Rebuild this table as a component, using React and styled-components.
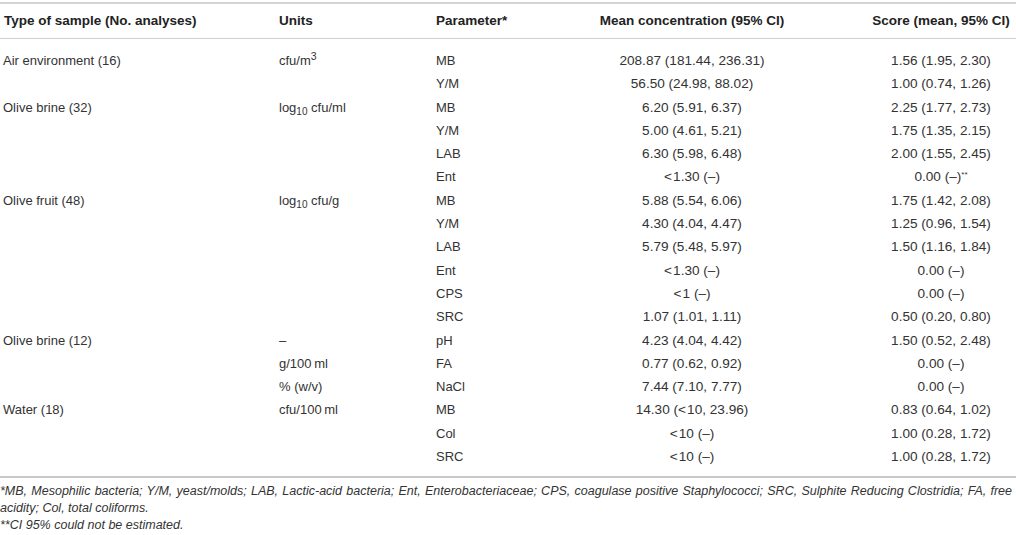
import React from "react";
import styled, { createGlobalStyle } from "styled-components";

const Global = createGlobalStyle`
  html, body { margin: 0; padding: 0; background: #fff; }
  body { font-family: "Liberation Sans", Arial, Helvetica, sans-serif; color: #333; }
`;

const Page = styled.div`
  width: 1016px;
  padding-top: 2px;
`;

const Grid = styled.div`
  display: grid;
  grid-template-columns: 279px 157px 128px 256px 1fr;
  grid-template-rows: 45px;
  grid-auto-rows: 23.3px;
  border-top: 2px solid #d4d4d4;
  border-bottom: 2px solid #c8c8c8;
  padding-bottom: 8px;
`;

const HeadCell = styled.div`
  height: 34px;
  line-height: 34px;
  text-align: ${(p) => (p.$center ? "center" : "left")};
  padding-left: ${(p) => p.$pl || 0}px;
  font-size: 13.5px;
  font-weight: bold;
  color: #222;
  border-bottom: 1.5px solid #cfcfcf;
  white-space: nowrap;
  align-self: start;
`;

const Cell = styled.div`
  line-height: 23.3px;
  text-align: ${(p) => (p.$center ? "center" : "left")};
  padding-left: ${(p) => p.$pl || 0}px;
  font-size: ${(p) => (p.$num ? 13.6 : 13)}px;
  color: #333;
  white-space: nowrap;
`;

const Sup = styled.sup`
  font-size: ${(p) => p.$size || 10}px;
  line-height: 0;
  vertical-align: ${(p) => p.$raise || 5}px;
`;

const Sub = styled.sub`
  font-size: 10px;
  line-height: 0;
  vertical-align: -3px;
`;

const Notes = styled.div`
  padding-top: 4.5px;
  padding-right: 4px;
  font-size: 12.5px;
  font-style: italic;
  line-height: 17px;
  color: #333;
`;

const Note = styled.p`
  margin: 0;
  text-align: ${(p) => (p.$justify ? "justify" : "left")};
`;

const log = (u) => (
  <>
    log<Sub>10</Sub>{" "}{u}
  </>
);

const lt = "<\u200a";

const rows = [
  ["Air environment (16)", <>cfu/m<Sup $size={10.5}>3</Sup></>, "MB", "208.87 (181.44, 236.31)", "1.56 (1.95, 2.30)"],
  ["", "", "Y/M", "56.50 (24.98, 88.02)", "1.00 (0.74, 1.26)"],
  ["Olive brine (32)", log("cfu/ml"), "MB", "6.20 (5.91, 6.37)", "2.25 (1.77, 2.73)"],
  ["", "", "Y/M", "5.00 (4.61, 5.21)", "1.75 (1.35, 2.15)"],
  ["", "", "LAB", "6.30 (5.98, 6.48)", "2.00 (1.55, 2.45)"],
  ["", "", "Ent", `${lt}1.30 (–)`, <>0.00 (–)<Sup $size={8} $raise={4}>**</Sup></>],
  ["Olive fruit (48)", log("cfu/g"), "MB", "5.88 (5.54, 6.06)", "1.75 (1.42, 2.08)"],
  ["", "", "Y/M", "4.30 (4.04, 4.47)", "1.25 (0.96, 1.54)"],
  ["", "", "LAB", "5.79 (5.48, 5.97)", "1.50 (1.16, 1.84)"],
  ["", "", "Ent", `${lt}1.30 (–)`, "0.00 (–)"],
  ["", "", "CPS", `${lt}1 (–)`, "0.00 (–)"],
  ["", "", "SRC", "1.07 (1.01, 1.11)", "0.50 (0.20, 0.80)"],
  ["Olive brine (12)", "–", "pH", "4.23 (4.04, 4.42)", "1.50 (0.52, 2.48)"],
  ["", "g/100\u2009ml", "FA", "0.77 (0.62, 0.92)", "0.00 (–)"],
  ["", "% (w/v)", "NaCl", "7.44 (7.10, 7.77)", "0.00 (–)"],
  ["Water (18)", "cfu/100\u2009ml", "MB", `14.30 (${lt}10, 23.96)`, "0.83 (0.64, 1.02)"],
  ["", "", "Col", `${lt}10 (–)`, "1.00 (0.28, 1.72)"],
  ["", "", "SRC", `${lt}10 (–)`, "1.00 (0.28, 1.72)"],
];

const headers = [
  { t: "Type of sample (No. analyses)", pl: 4 },
  { t: "Units" },
  { t: "Parameter*" },
  { t: "Mean concentration (95% CI)", center: true },
  { t: "Score (mean, 95% CI)", center: true, pl: 46 },
];

export default function App() {
  return (
    <>
      <Global />
      <Page>
        <Grid>
          {headers.map((h, i) => (
            <HeadCell key={i} $center={h.center} $pl={h.pl}>
              {h.t}
            </HeadCell>
          ))}
          {rows.map((r, ri) => (
            <React.Fragment key={ri}>
              <Cell $pl={3}>{r[0]}</Cell>
              <Cell>{r[1]}</Cell>
              <Cell>{r[2]}</Cell>
              <Cell $center $num>{r[3]}</Cell>
              <Cell $center $num $pl={46}>{r[4]}</Cell>
            </React.Fragment>
          ))}
        </Grid>
        <Notes>
          <Note $justify>
            *MB, Mesophilic bacteria; Y/M, yeast/molds; LAB, Lactic-acid bacteria; Ent, Enterobacteriaceae; CPS,
            coagulase positive Staphylococci; SRC, Sulphite Reducing Clostridia; FA, free acidity; Col, total coliforms.
          </Note>
          <Note>**CI 95% could not be estimated.</Note>
        </Notes>
      </Page>
    </>
  );
}
